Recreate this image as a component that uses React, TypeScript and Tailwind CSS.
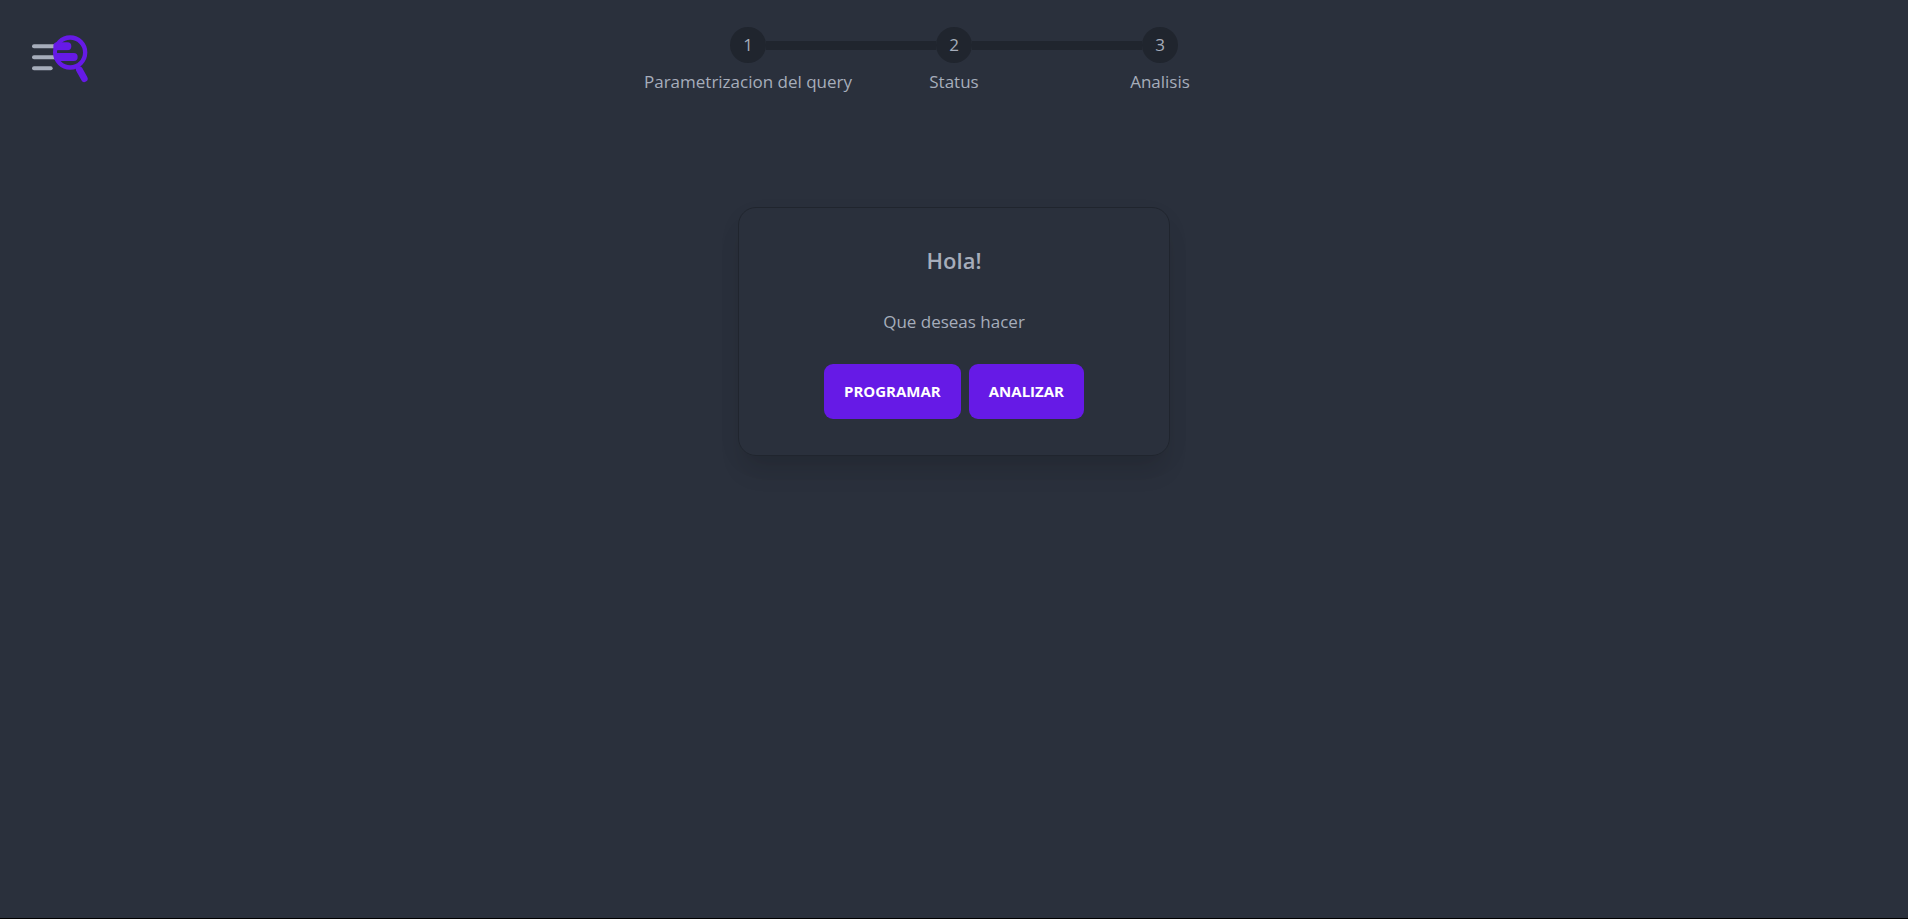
const steps = ['Parametrizacion del query', 'Status', 'Analisis'];

function Logo() {
  return (
    <svg viewBox="0 0 240 195" className="h-[65px] w-20" fill="none" strokeLinecap="round" aria-hidden="true">
      <g stroke="#a6adbb" strokeWidth="12">
        <path d="M42 63.500H108" />
        <path d="M42 96.500H105" />
        <path d="M42 129.500H92" />
      </g>
      <g stroke="#661ae6">
        <circle cx="150.500" cy="82.500" r="45" fill="#2a303c" strokeWidth="13" />
        <path d="M112 64H142M114 96H161" strokeWidth="24" />
        <path d="M173 127L178 138" strokeWidth="13" />
        <path d="M178 134L193 161" strokeWidth="20" />
      </g>
      <path d="M111 80H154" stroke="#2a303c" strokeWidth="7" strokeLinecap="butt" />
    </svg>
  );
}

function Steps() {
  return (
    <ol className="flex">
      {steps.map((label, i) => (
        <li key={label} className="flex w-[206px] flex-col items-center">
          <div className="flex h-9 w-full items-center">
            <span className={i === 0 ? 'h-[9px] flex-1' : 'h-[9px] flex-1 bg-[#20252e]'} />
            <span className="flex size-9 items-center justify-center rounded-full bg-[#20252e]">{i + 1}</span>
            <span className={i === steps.length - 1 ? 'h-[9px] flex-1' : 'h-[9px] flex-1 bg-[#20252e]'} />
          </div>
          <span className="mt-1 whitespace-nowrap leading-[30px]">{label}</span>
        </li>
      ))}
    </ol>
  );
}

function ActionButton({ children }: { children: string }) {
  return (
    <button
      type="button"
      className="h-[55px] cursor-pointer rounded-[9px] bg-[#661ae6] px-5 text-[15px] font-bold uppercase text-white hover:bg-[#570fd1]"
    >
      {children}
    </button>
  );
}

export default function App() {
  return (
    <div className="min-h-screen bg-white pr-3 pb-1 font-['Open_Sans','Noto_Sans',sans-serif] text-[17px] text-[#a6adbb]">
      <div className="grid min-h-[calc(100vh-4px)] grid-cols-[1fr_auto_1fr] grid-rows-[auto_1fr] border-b border-black bg-[#2a303c]">
        <header className="px-5 pt-[25px]">
          <a href="#" aria-label="Inicio" className="inline-block">
            <Logo />
          </a>
        </header>
        <nav aria-label="Progreso" className="pt-[27px]">
          <Steps />
        </nav>
        <main className="col-span-3 flex items-start justify-center pt-[110px]">
          <section className="flex w-full max-w-[432px] flex-col items-center rounded-[18px] border border-[#20252e] px-9 py-9 text-center shadow-[0_20px_25px_-5px_rgba(0,0,0,0.1),0_8px_28px_-6px_rgba(0,0,0,0.08)]">
            <h1 className="text-[22px] font-semibold leading-8">Hola!</h1>
            <p className="mt-8 leading-7">Que deseas hacer</p>
            <div className="mt-7 flex gap-2">
              <ActionButton>Programar</ActionButton>
              <ActionButton>Analizar</ActionButton>
            </div>
          </section>
        </main>
      </div>
    </div>
  );
}
